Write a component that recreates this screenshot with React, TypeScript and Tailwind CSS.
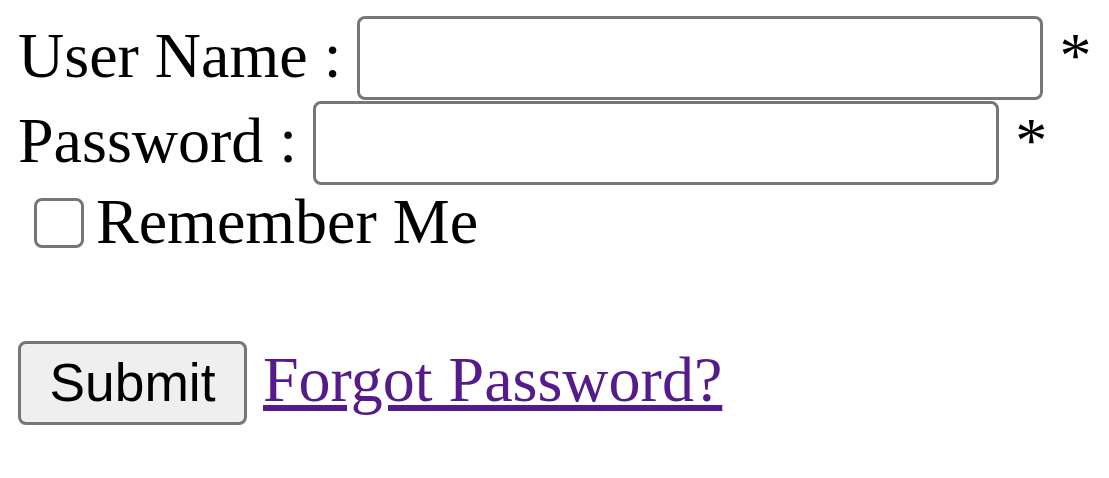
export default function App() {
  return (
    <div className="min-h-screen bg-white pl-[18px] pt-[16px] font-['Liberation_Serif',serif] text-[64px] text-black">
      <form className="flex flex-col gap-[1px]">
        <div className="flex h-[84px] items-center">
          <label htmlFor="username" className="mb-[5px] whitespace-pre leading-none">
            User Name :{" "}
          </label>
          <input
            id="username"
            type="text"
            className="h-[84px] w-[686px] rounded-[8px] border-[3px] border-[#767676] bg-white px-[8px] font-['Liberation_Sans',sans-serif] text-[53px] outline-none"
          />
          <span className="mb-[5px] whitespace-pre leading-none"> *</span>
        </div>
        <div className="flex h-[84px] items-center">
          <label htmlFor="password" className="mb-[5px] whitespace-pre leading-none">
            Password :{" "}
          </label>
          <input
            id="password"
            type="password"
            className="h-[84px] w-[686px] rounded-[8px] border-[3px] border-[#767676] bg-white px-[8px] font-['Liberation_Sans',sans-serif] text-[53px] outline-none"
          />
          <span className="mb-[5px] whitespace-pre leading-none"> *</span>
        </div>
        <div className="flex h-[74px] items-center">
          <label className="flex items-center leading-none">
            <span className="ml-[16px] mr-[12px] h-[50px] w-[50px] rounded-[8px] border-[3px] border-[#767676] bg-white" />
            <span className="mb-[2px]">Remember Me</span>
          </label>
        </div>
        <div className="mt-[80px] flex h-[84px] items-center">
          <button
            type="button"
            className="h-[84px] w-[229px] rounded-[8px] border-[3px] border-[#767676] bg-[#efefef] font-['Liberation_Sans',sans-serif] text-[53.33px] leading-none"
          >
            Submit
          </button>
          <span className="whitespace-pre leading-none"> </span>
          <a href="#" className="mb-[6px] leading-none text-[#551a8b] underline">
            Forgot Password?
          </a>
        </div>
      </form>
    </div>
  );
}
